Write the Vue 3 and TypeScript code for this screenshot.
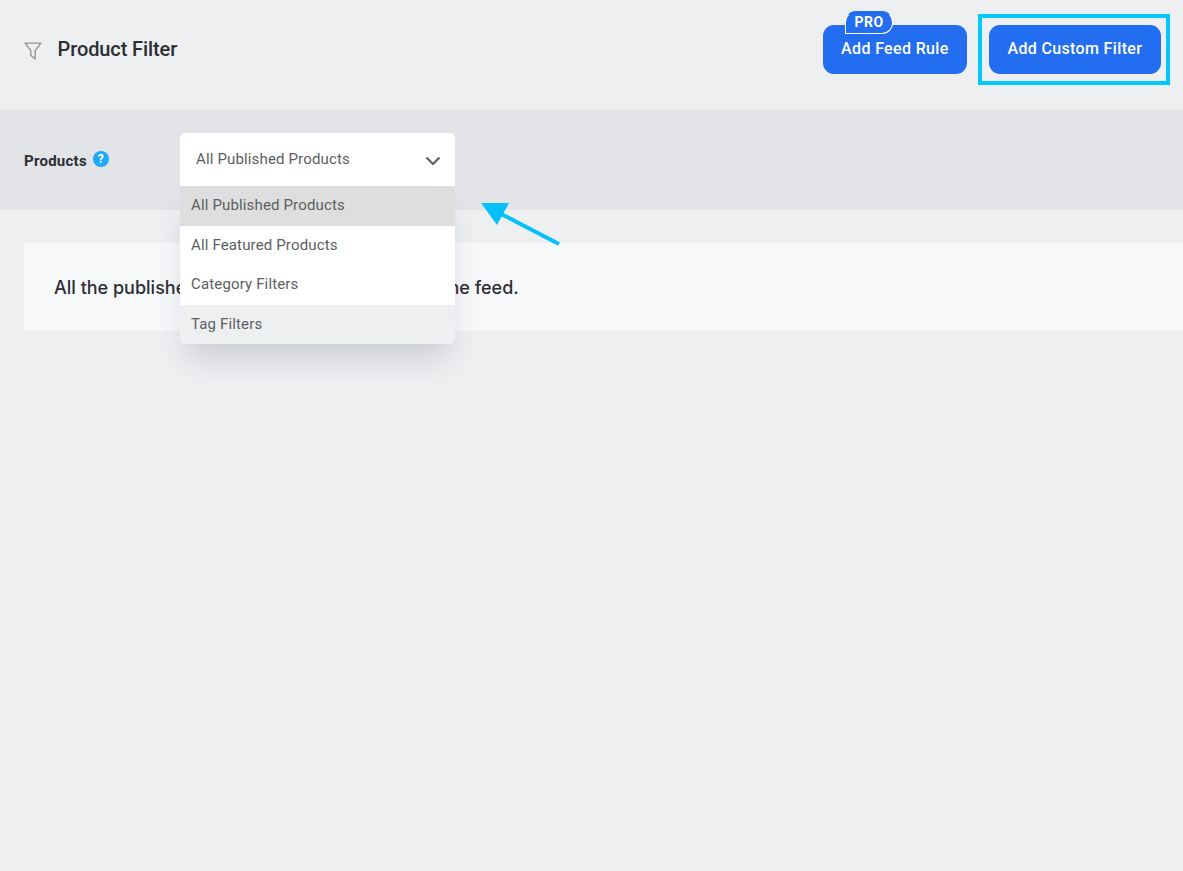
<script setup lang="ts">
const options: { label: string; cls: string }[] = [
  { label: 'All Published Products', cls: 'selected' },
  { label: 'All Featured Products', cls: '' },
  { label: 'Category Filters', cls: '' },
  { label: 'Tag Filters', cls: 'hovered' },
]
</script>

<template>
  <div class="page">
    <header class="head">
      <div class="title-wrap">
        <svg class="funnel" width="18" height="18" viewBox="0 0 18 18" fill="none">
          <path d="M1 1.2H17L11.2 8.6V17L6.8 13.6V8.6L1 1.2Z" stroke="#8f9296" stroke-width="1.3" stroke-linejoin="round" />
        </svg>
        <h1 class="title">Product Filter</h1>
      </div>
      <div class="actions">
        <button class="btn rule">
          <span class="pro">PRO</span>
          Add Feed Rule
        </button>
        <div class="highlight">
          <button class="btn custom">Add Custom Filter</button>
        </div>
      </div>
    </header>

    <section class="filter-row">
      <div class="label">
        <span>Products</span>
        <span class="help">?</span>
      </div>
      <div class="select-wrap">
        <div class="select">
          <span>All Published Products</span>
          <svg width="16" height="10" viewBox="0 0 16 10" fill="none">
            <path d="M1.5 1.5L8 8L14.5 1.5" stroke="#5c5e62" stroke-width="2.2" />
          </svg>
        </div>
        <ul class="menu">
          <li v-for="o in options" :key="o.label" :class="o.cls">{{ o.label }}</li>
        </ul>
      </div>
    </section>

    <div class="notice">All the published products will be included in the feed.</div>

    <svg class="arrow" width="84" height="50" viewBox="0 0 84 50" fill="none">
      <path d="M79 42L16 9.3" stroke="#06c1f9" stroke-width="4" />
      <path d="M1 1H29L17 23Z" fill="#06c1f9" />
    </svg>
  </div>
</template>

<style>
html, body { margin: 0; background: #edeff1; }
</style>

<style scoped>
.page {
  position: relative;
  width: 1183px;
  height: 871px;
  overflow: hidden;
  background: #edeff1;
  font-family: Roboto, "Liberation Sans", sans-serif;
  color: #2c2e33;
}
.head {
  height: 109px;
  box-sizing: border-box;
  padding: 14px 13px 0 24px;
  display: flex;
  justify-content: space-between;
  align-items: flex-start;
}
.title-wrap {
  display: flex;
  align-items: center;
  gap: 15.5px;
  height: 69px;
}
.funnel { display: block; margin-top: 5px; }
.title {
  margin: 0;
  font-size: 20px;
  line-height: 24px;
  font-weight: 500;
  letter-spacing: -0.1px;
}
.actions {
  display: flex;
  align-items: center;
  gap: 11px;
}
.btn {
  position: relative;
  height: 49px;
  padding: 0 18px 2px;
  border: 0;
  border-radius: 11px;
  background: #236ef0;
  color: #fff;
  font: 500 16px/20px Roboto, "Liberation Sans", sans-serif;
  letter-spacing: 0.35px;
  white-space: nowrap;
}
.custom { padding: 0 18.75px 2px; }
.pro {
  position: absolute;
  top: -14px;
  left: 22px;
  width: 48px;
  height: 23px;
  box-sizing: border-box;
  border: 1px solid #fff;
  border-top-color: #236ef0;
  border-radius: 11px 11px 11px 0;
  background: #236ef0;
  font-size: 14px;
  font-weight: 700;
  line-height: 20px;
  letter-spacing: 0.6px;
  text-align: center;
}
.highlight {
  padding: 7px 5px 7px 7px;
  border: 4px solid #00c8fa;
}
.filter-row {
  height: 101px;
  box-sizing: border-box;
  padding: 24px 24px 0;
  display: flex;
  align-items: flex-start;
  background: #e2e4e8;
}
.label {
  width: 156px;
  height: 52px;
  box-sizing: border-box;
  padding-top: 4px;
  display: flex;
  align-items: center;
  gap: 6px;
  font-size: 15px;
  font-weight: 700;
  letter-spacing: 0.25px;
}
.help {
  width: 16px;
  height: 16px;
  margin-top: -4px;
  border-radius: 50%;
  background: #1eaaf8;
  color: #fff;
  font-size: 12px;
  line-height: 16px;
  letter-spacing: 0;
  text-align: center;
}
.select-wrap {
  position: relative;
  width: 275px;
}
.select {
  height: 53px;
  box-sizing: border-box;
  padding: 0 14px 2px 16px;
  display: flex;
  align-items: center;
  justify-content: space-between;
  background: #fff;
  border-radius: 6px 6px 0 0;
  color: #5c5e62;
  font-size: 15px;
  letter-spacing: 0.15px;
}
.select svg { margin-top: 4px; }
.menu {
  position: absolute;
  top: 53px;
  left: 0;
  right: 0;
  margin: 0;
  padding: 0;
  list-style: none;
  background: #fff;
  border-radius: 0 0 6px 6px;
  box-shadow: 0 20px 30px -8px rgba(50, 56, 70, 0.2);
  color: #5c5e62;
  font-size: 15px;
  letter-spacing: 0.15px;
  overflow: hidden;
}
.menu li {
  height: 39.5px;
  padding-left: 11px;
  line-height: 38px;
}
.menu li.selected { background: #dddedd; }
.menu li.hovered { background: #eeeff1; }
.notice {
  margin: 33px 0 0 24px;
  height: 88px;
  box-sizing: border-box;
  padding-left: 30px;
  display: flex;
  align-items: center;
  background: #f7f8fa;
  font-family: Inter, "Liberation Sans", sans-serif;
  font-size: 18px;
  font-weight: 500;
}
.arrow {
  position: absolute;
  left: 480px;
  top: 202px;
}
</style>
